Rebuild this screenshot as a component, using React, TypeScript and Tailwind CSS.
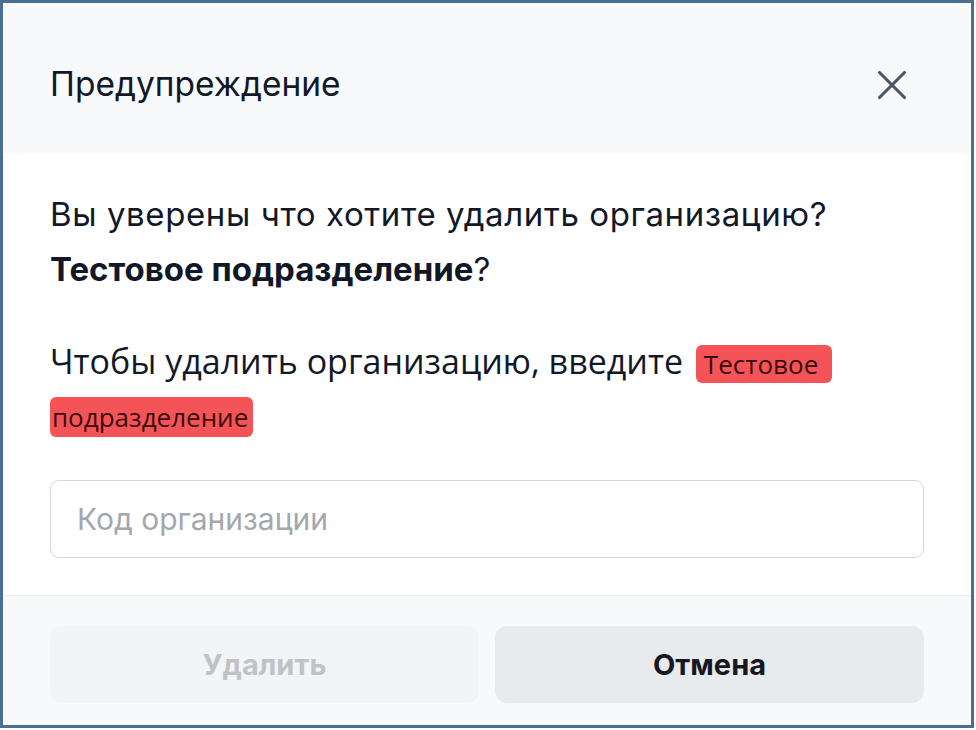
import { X } from 'lucide-react';

export default function App() {
  return (
    <div className="w-[976px] h-[730px] bg-white">
      <div className="w-[974px] h-[728px] border-[3px] border-[#4b6f93] flex flex-col font-['Inter',sans-serif] text-[#111827]">
        {/* Header */}
        <div className="h-[150px] shrink-0 bg-[#f8f9fb] flex items-center justify-between pt-[14px] pl-[47px] pr-[54px]">
          <h2 className="text-[33.5px] leading-none">Предупреждение</h2>
          <X className="w-[50px] h-[50px] text-[#4b5563]" strokeWidth={1.5} />
        </div>

        {/* Body */}
        <div className="flex-1 px-[47px] pt-[34px]">
          <p className="text-[33px] leading-[55px] tracking-[0.6px]">
            Вы уверены что хотите удалить организацию?
            <br />
            <span className="font-bold tracking-normal">Тестовое подразделение</span>?
          </p>
          <p className="mt-[39px] text-[34px] leading-[50px] font-['Open_Sans',sans-serif]">
            Чтобы удалить организацию, введите{' '}
            <span className="ml-[4px] bg-[#f45457] text-[#3b0a0a] text-[26px] rounded-[6px] pl-[8px] pr-[14px] py-[1px]">
              Тестовое
            </span>
            <br />
            <span className="bg-[#f45457] text-[#3b0a0a] text-[26px] rounded-[6px] pl-[2px] pr-[5px] py-[2px]">
              подразделение
            </span>
          </p>
          <input
            placeholder="Код организации"
            className="mt-[38px] w-full h-[78px] rounded-[9px] border border-[#d4d6da] px-[26px] text-[30px] placeholder:text-[#a3a7ae] outline-none"
          />
        </div>

        {/* Footer */}
        <div className="h-[130px] shrink-0 bg-[#f8f9fb] border-t border-[#eceef1] flex gap-[16px] px-[47px] pt-[30px]">
          <button className="flex-1 h-[77px] rounded-[12px] bg-[#f3f4f6] text-[#bfc2c7] text-[29px] font-bold">
            Удалить
          </button>
          <button className="flex-1 h-[77px] rounded-[12px] bg-[#e9eaed] text-[#151821] text-[29px] font-bold">
            Отмена
          </button>
        </div>
      </div>
    </div>
  );
}
